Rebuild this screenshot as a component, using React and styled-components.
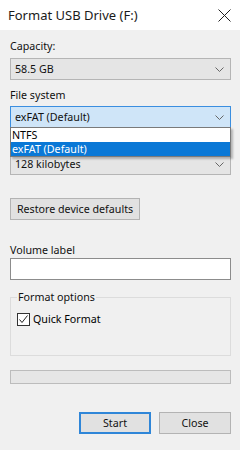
import React from "react";
import styled, { createGlobalStyle } from "styled-components";

const Global = createGlobalStyle`
  html, body { margin: 0; padding: 0; background: #f0f0f0; }
  body { font-family: "Noto Sans", "Open Sans", sans-serif; font-size: 10.7px; color: #000; }
`;

const Window = styled.div`
  width: 240px;
  height: 450px;
  background: #f0f0f0;
  display: flex;
  flex-direction: column;
`;

const TitleBar = styled.div`
  height: 30px;
  background: #fff;
  display: flex;
  align-items: center;
  justify-content: space-between;
  padding: 0 9px 0 8px;
  box-sizing: border-box;
  flex-shrink: 0;
`;

const Title = styled.span`
  font-size: 13px;
  color: #1a1a1a;
`;

const CloseX = styled.svg`
  width: 13px;
  height: 13px;
  display: block;
`;

const Body = styled.div`
  padding: 0 9px 0 10px;
  display: flex;
  flex-direction: column;
  position: relative;
`;

const Label = styled.div`
  height: 14px;
  line-height: 14px;
  margin-top: ${(p) => p.$mt}px;
  margin-bottom: ${(p) => p.$mb}px;
  color: #111;
`;

const Spacer = styled.div`
  height: ${(p) => p.$h}px;
`;

const Combo = styled.div`
  height: 22px;
  box-sizing: border-box;
  border: 1px solid ${(p) => (p.$focused ? "#3a8ee0" : "#b5b5b5")};
  background: ${(p) => (p.$focused ? "#cfe5f8" : "#e5e5e5")};
  display: flex;
  align-items: center;
  justify-content: space-between;
  padding: 0 6px 0 4px;
  color: #111;
`;

const Chevron = styled.svg`
  width: 9px;
  height: 5px;
  display: block;
`;

const Wrap = styled.div`
  position: relative;
`;

const List = styled.div`
  position: absolute;
  left: 0;
  right: 0;
  top: 21px;
  background: #fff;
  border: 1px solid #7a7a7a;
  box-shadow: 2px 2px 2px rgba(0, 0, 0, 0.25);
  z-index: 2;
`;

const Option = styled.div`
  height: 14px;
  line-height: 14px;
  padding-left: 1px;
  background: ${(p) => (p.$selected ? "#0a78d6" : "#fff")};
  color: ${(p) => (p.$selected ? "#fff" : "#000")};
`;

const Button = styled.div`
  height: 22px;
  box-sizing: border-box;
  border: ${(p) => (p.$default ? "2px solid #2f86d8" : "1px solid #b3b3b3")};
  background: #e1e1e1;
  display: flex;
  align-items: center;
  justify-content: center;
  color: #111;
  width: ${(p) => p.$w}px;
`;

const RestoreRow = styled.div`
  margin-top: 23px;
  display: flex;
`;

const Input = styled.div`
  height: 22px;
  box-sizing: border-box;
  background: #fff;
  border: 1px solid #8c8c8c;
`;

const Group = styled.fieldset`
  margin: 10px 0 0 0;
  padding: 9px 6px 0 6px;
  height: 66px;
  box-sizing: border-box;
  border: 1px solid #dcdcdc;
  border-radius: 0;
  min-width: 0;
`;

const Legend = styled.legend`
  padding: 0 1px;
  margin-left: 0;
  line-height: 14px;
  color: #111;
`;

const CheckRow = styled.label`
  display: flex;
  align-items: center;
  gap: 3px;
  margin-top: -1px;
`;

const Box = styled.span`
  width: 13px;
  height: 13px;
  box-sizing: border-box;
  border: 1px solid #333;
  background: #fff;
  display: flex;
  align-items: center;
  justify-content: center;
`;

const Progress = styled.div`
  margin-top: 14px;
  height: 14px;
  box-sizing: border-box;
  border: 1px solid #bcbcbc;
  background: #e6e6e6;
`;

const Footer = styled.div`
  margin-top: 28px;
  display: flex;
  justify-content: flex-end;
  gap: 8px;
`;

const Chev = () => (
  <Chevron viewBox="0 0 9 5">
    <path d="M0.5 0.5 L4.5 4.5 L8.5 0.5" fill="none" stroke="#666" strokeWidth="1" />
  </Chevron>
);

export default function App() {
  return (
    <>
      <Global />
      <Window>
        <TitleBar>
          <Title>Format USB Drive (F:)</Title>
          <CloseX viewBox="0 0 13 13">
            <path d="M0.5 0.5 L12.5 12.5 M12.5 0.5 L0.5 12.5" stroke="#222" strokeWidth="1" fill="none" />
          </CloseX>
        </TitleBar>
        <Body>
          <Label $mt={9} $mb={5}>Capacity:</Label>
          <Combo>
            <span>58.5 GB</span>
            <Chev />
          </Combo>
          <Label $mt={8} $mb={4}>File system</Label>
          <Wrap>
            <Combo $focused>
              <span>exFAT (Default)</span>
              <Chev />
            </Combo>
            <List>
              <Option>NTFS</Option>
              <Option $selected>exFAT (Default)</Option>
            </List>
          </Wrap>
          <Spacer $h={25} />
          <Combo>
            <span>128 kilobytes</span>
            <Chev />
          </Combo>
          <RestoreRow>
            <Button $w={130}>Restore device defaults</Button>
          </RestoreRow>
          <Label $mt={23} $mb={1}>Volume label</Label>
          <Input />
          <Group>
            <Legend>Format options</Legend>
            <CheckRow>
              <Box>
                <svg width="11" height="11" viewBox="0 0 11 11">
                  <path d="M1.5 5.5 L4 8.5 L9.5 1.5" fill="none" stroke="#222" strokeWidth="1" />
                </svg>
              </Box>
              <span>Quick Format</span>
            </CheckRow>
          </Group>
          <Progress />
          <Footer>
            <Button $w={72} $default>Start</Button>
            <Button $w={72}>Close</Button>
          </Footer>
        </Body>
      </Window>
    </>
  );
}
